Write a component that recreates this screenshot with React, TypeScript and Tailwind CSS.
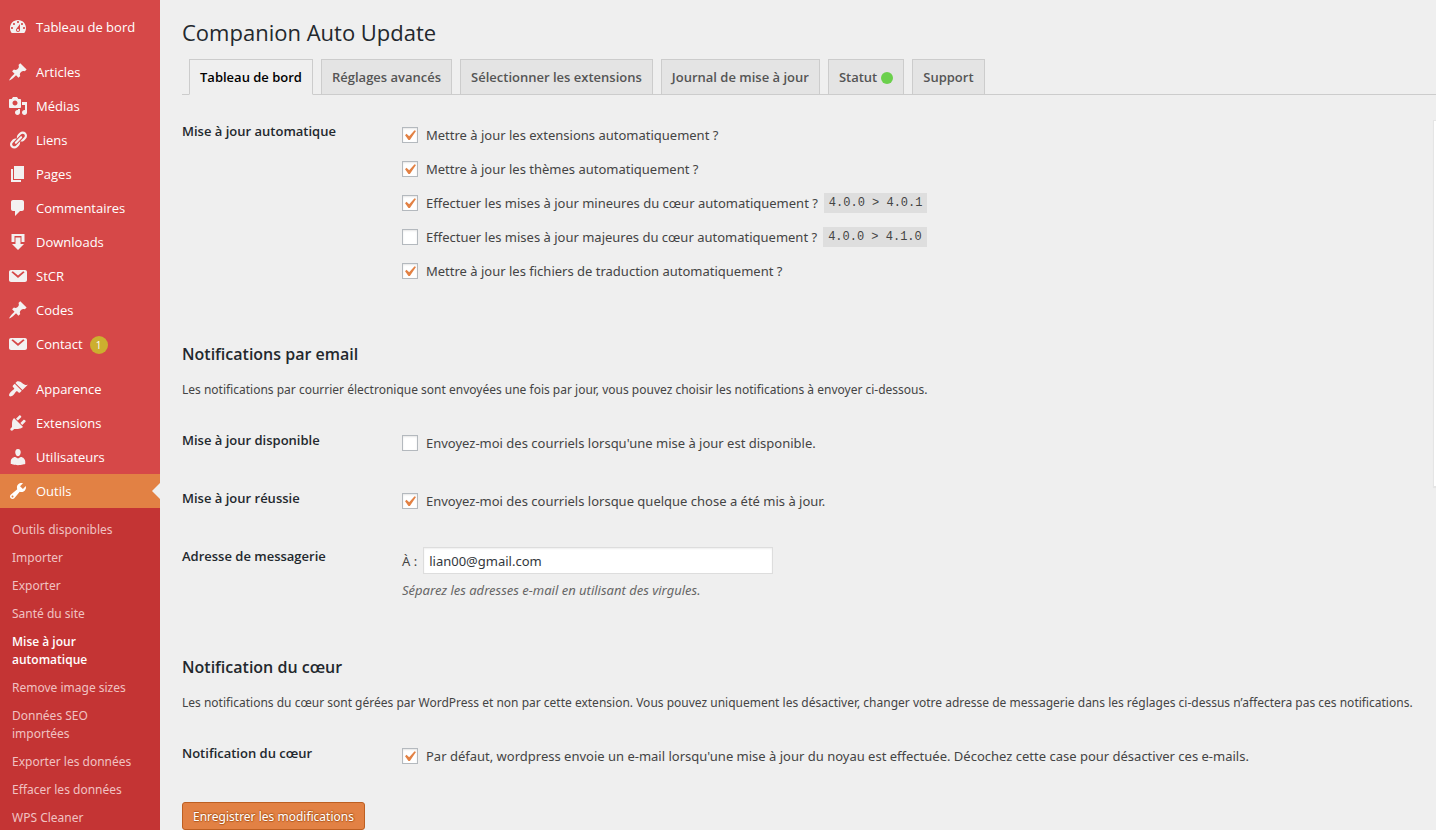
import React from 'react';
import { clsx } from 'clsx';

const ICONS = {
  dashboard:
    'M3.76 16h12.48c1.1-1.37 1.76-3.11 1.76-5 0-4.42-3.58-8-8-8s-8 3.58-8 8c0 1.89.66 3.63 1.76 5zM10 4c.55 0 1 .45 1 1s-.45 1-1 1-1-.45-1-1 .45-1 1-1zM6 6c.55 0 1 .45 1 1s-.45 1-1 1-1-.45-1-1 .45-1 1-1zm8 0c.55 0 1 .45 1 1s-.45 1-1 1-1-.45-1-1 .45-1 1-1zm-5.37 5.55L12 7v6c0 1.1-.9 2-2 2s-2-.9-2-2c0-.57.24-1.08.63-1.45zM4 10c.55 0 1 .45 1 1s-.45 1-1 1-1-.45-1-1 .45-1 1-1zm12 0c.55 0 1 .45 1 1s-.45 1-1 1-1-.45-1-1 .45-1 1-1zm-5 3c0-.55-.45-1-1-1s-1 .45-1 1 .45 1 1 1 1-.45 1-1z',
  pin: 'M10.44 3.02l1.82-1.82 6.36 6.35-1.83 1.82c-1.05-.68-2.48-.57-3.41.36l-.75.75c-.92.93-1.04 2.35-.35 3.41l-1.83 1.82-2.41-2.41-2.8 2.79c-.42.42-3.38 2.71-3.8 2.29s1.86-3.39 2.28-3.81l2.79-2.79L4.1 9.36l1.83-1.82c1.05.69 2.48.57 3.4-.36l.75-.75c.93-.92 1.05-2.35.36-3.41z',
  media:
    'M13 11V4c0-.55-.45-1-1-1h-1.67L9 1H5L3.67 3H2c-.55 0-1 .45-1 1v7c0 .55.45 1 1 1h10c.55 0 1-.45 1-1zM7 4.5c1.38 0 2.5 1.12 2.5 2.5S8.38 9.5 7 9.5 4.5 8.38 4.5 7 5.62 4.5 7 4.5zM14 6h5v10.5c0 1.38-1.12 2.5-2.5 2.5S14 17.88 14 16.5s1.12-2.5 2.5-2.5c.17 0 .34.02.5.05V9h-3V6zm-4 8.05V13h2v3.5c0 1.38-1.12 2.5-2.5 2.5S7 17.88 7 16.5 8.12 14 9.5 14c.17 0 .34.02.5.05z',
  link: 'M17.74 2.76c1.68 1.69 1.68 4.41 0 6.1l-1.53 1.52c-1.12 1.12-2.7 1.47-4.14 1.09l2.62-2.61.76-.77.76-.76c.84-.84.84-2.2 0-3.04-.84-.85-2.2-.85-3.04 0l-.77.76-3.38 3.38c-.37-1.44-.02-3.02 1.1-4.14l1.52-1.53c1.69-1.68 4.42-1.68 6.1 0zM8.59 13.43l5.34-5.34c.42-.42.42-1.1 0-1.52-.44-.43-1.13-.39-1.53 0l-5.33 5.34c-.42.42-.42 1.1 0 1.52.44.43 1.13.39 1.52 0zm-.76 2.29l4.14-4.15c.38 1.44.03 3.02-1.09 4.14l-1.52 1.53c-1.69 1.68-4.41 1.68-6.1 0-1.68-1.68-1.68-4.42 0-6.1l1.53-1.52c1.12-1.12 2.7-1.47 4.14-1.1l-4.14 4.15c-.85.84-.85 2.2 0 3.05.84.84 2.2.84 3.04 0z',
  page: 'M6 15V2h10v13H6zm-1 1h8v2H3V5h2v11z',
  comment:
    'M5 2h9c1.1 0 2 .9 2 2v7c0 1.1-.9 2-2 2h-2l-5 5v-5H5c-1.1 0-2-.9-2-2V4c0-1.1.9-2 2-2z',
  download: 'M3.5 2h13v8h-3V4h-7v6h-3zM7.500 5.500h5V12H16l-6 6-6-6h3.500z',
  mail: 'M3 4h14c1.100 0 2 .9 2 2v8c0 1.100-.9 2-2 2H3c-1.100 0-2-.9-2-2V6c0-1.100.9-2 2-2zm13.600 2.200L15.200 5.200 10 9.600 4.800 5.200 3.400 6.200 10 12z',
  brush:
    'M14.48 11.06L7.41 3.99l1.5-1.5c.5-.56 2.3-.47 3.51.32 1.21.8 1.43 1.28 2.91 2.1 1.18.64 2.45 1.26 4.45.85zm-.71.71L6.7 4.7 4.93 6.47c-.39.39-.39 1.02 0 1.41l1.06 1.06c.39.39.39 1.03 0 1.42-.6.6-1.43 1.11-2.21 1.69-.35.26-.7.53-1.01.84C1.43 14.23.4 16.08 1.4 17.07c.99 1 2.84-.03 4.18-1.36.31-.31.58-.66.85-1.02.57-.78 1.08-1.61 1.69-2.21.39-.39 1.02-.39 1.41 0l1.06 1.06c.39.39 1.02.39 1.41 0z',
  plug: 'M13.11 4.36L9.87 7.6 8 5.73l3.24-3.24c.35-.34 1.05-.2 1.56.32.52.51.66 1.21.31 1.55zm-8 1.77l.91-1.12 9.01 9.01-1.19.84c-.71.71-2.63 1.16-3.82 1.16H6.14L4.9 17.26c-.59.59-1.54.59-2.12 0-.59-.58-.59-1.53 0-2.12l1.24-1.24v-3.88c0-1.13.4-3.19 1.09-3.89zm7.26 3.97l3.24-3.24c.34-.35 1.04-.21 1.55.31.52.51.66 1.21.31 1.55l-3.24 3.25z',
  user: 'M10 9.25c-2.27 0-2.73-3.44-2.73-3.44C7 4.02 7.82 2 9.97 2c2.16 0 2.98 2.02 2.71 3.81 0 0-.41 3.44-2.68 3.44zm0 2.2L12.72 10c2.39 0 4.52 2.33 4.52 4.53v2.49s-3.65 1.13-7.24 1.13c-3.65 0-7.24-1.13-7.24-1.13v-2.49c0-2.25 1.94-4.48 4.47-4.48z',
  wrench:
    'M16.68 9.77c-1.34 1.34-3.3 1.67-4.95.99l-5.41 6.52c-.99.99-2.59.99-3.58 0s-.99-2.59 0-3.57l6.52-5.42c-.68-1.65-.35-3.61.99-4.95 1.28-1.28 3.12-1.62 4.72-1.06l-2.89 2.89 2.82 2.82 2.86-2.87c.53 1.58.18 3.39-1.08 4.65zM3.81 16.21c.4.39 1.04.39 1.43 0 .4-.4.4-1.04 0-1.43-.39-.4-1.03-.4-1.43 0-.39.39-.39 1.03 0 1.43z',
};

interface MenuItem {
  label: string;
  icon: keyof typeof ICONS;
  count?: number;
  active?: boolean;
}

const menuGroups: MenuItem[][] = [
  [{ label: 'Tableau de bord', icon: 'dashboard' }],
  [
    { label: 'Articles', icon: 'pin' },
    { label: 'Médias', icon: 'media' },
    { label: 'Liens', icon: 'link' },
    { label: 'Pages', icon: 'page' },
    { label: 'Commentaires', icon: 'comment' },
    { label: 'Downloads', icon: 'download' },
    { label: 'StCR', icon: 'mail' },
    { label: 'Codes', icon: 'pin' },
    { label: 'Contact', icon: 'mail', count: 1 },
  ],
  [
    { label: 'Apparence', icon: 'brush' },
    { label: 'Extensions', icon: 'plug' },
    { label: 'Utilisateurs', icon: 'user' },
    { label: 'Outils', icon: 'wrench', active: true },
  ],
];

const subMenu = [
  'Outils disponibles',
  'Importer',
  'Exporter',
  'Santé du site',
  'Mise à jour automatique',
  'Remove image sizes',
  'Données SEO importées',
  'Exporter les données',
  'Effacer les données',
  'WPS Cleaner',
];

const tabs = [
  { label: 'Tableau de bord', active: true },
  { label: 'Réglages avancés' },
  { label: 'Sélectionner les extensions' },
  { label: 'Journal de mise à jour' },
  { label: 'Statut', dot: true },
  { label: 'Support' },
];

const updateOptions = [
  { id: 'plugins', label: 'Mettre à jour les extensions automatiquement ?', checked: true },
  { id: 'themes', label: 'Mettre à jour les thèmes automatiquement ?', checked: true },
  { id: 'minor', label: 'Effectuer les mises à jour mineures du cœur automatiquement ?', checked: true, code: '4.0.0 > 4.0.1' },
  { id: 'major', label: 'Effectuer les mises à jour majeures du cœur automatiquement ?', checked: false, code: '4.0.0 > 4.1.0' },
  { id: 'translations', label: 'Mettre à jour les fichiers de traduction automatiquement ?', checked: true },
];

function Icon({ name }: { name: keyof typeof ICONS }) {
  return (
    <svg viewBox="0 0 20 20" className="h-5 w-5 shrink-0" fill="currentColor" fillRule="evenodd" aria-hidden="true">
      <path d={ICONS[name]} />
    </svg>
  );
}

function Sidebar() {
  return (
    <aside className="w-40 shrink-0 bg-[#d64848] pt-[10px] text-white">
      <nav>
        {menuGroups.map((group, i) => (
          <ul key={i} className={clsx(i > 0 && 'mt-[11px]')}>
            {group.map((item) => (
              <li key={item.label}>
                <a
                  href="#"
                  className={clsx(
                    'relative flex h-[34px] items-center gap-2 pl-2 text-[13px]',
                    item.active ? 'bg-[#e28144]' : 'hover:bg-[#c43434]'
                  )}
                >
                  <span className={clsx(item.active ? 'text-white' : 'text-[#f3f1f1]')}>
                    <Icon name={item.icon} />
                  </span>
                  <span className="pt-[2px]">{item.label}</span>
                  {item.count && (
                    <span className="-ml-px mt-[2px] flex h-[18px] w-[18px] items-center justify-center rounded-full bg-[#ccaf2f] text-[10px]">
                      {item.count}
                    </span>
                  )}
                  {item.active && (
                    <span className="absolute right-0 top-[9px] border-y-8 border-r-8 border-y-transparent border-r-[#efefef]" />
                  )}
                </a>
              </li>
            ))}
          </ul>
        ))}
      </nav>
      <ul className="bg-[#c43434] py-2">
        {subMenu.map((label) => (
          <li key={label}>
            <a
              href="#"
              className={clsx(
                'block py-[5px] pl-3 pr-6 text-[12px] leading-[18px]',
                label === 'Mise à jour automatique'
                  ? 'font-semibold text-white'
                  : "font-['Noto_Sans',sans-serif] text-[#f0c2c2]"
              )}
            >
              {label}
            </a>
          </li>
        ))}
      </ul>
    </aside>
  );
}

function Checkbox({ id, label, checked }: { id: string; label: string; checked: boolean }) {
  return (
    <div className="flex items-center gap-2">
      <span className="relative h-4 w-4">
        <input
          id={id}
          type="checkbox"
          defaultChecked={checked}
          className="peer block h-4 w-4 appearance-none border border-[#b4b9be] bg-white shadow-[inset_0_1px_2px_rgba(0,0,0,0.1)]"
        />
        <svg
          viewBox="0 0 20 20"
          className="pointer-events-none absolute -left-[3px] -top-[2px] hidden h-[21px] w-[21px] fill-[#e28144] peer-checked:block"
          aria-hidden="true"
        >
          <path d="M14.830 4.890l1.340.940-5.810 8.380H9.020L5.780 9.670l1.340-1.250 2.570 2.400z" />
        </svg>
      </span>
      <label htmlFor={id} className="pt-[2px]">
        {label}
      </label>
    </div>
  );
}

function Row({ title, children }: { title: string; children: React.ReactNode }) {
  return (
    <div className="grid min-h-[58px] grid-cols-[220px_1fr]">
      <div className="font-semibold leading-[26px] text-[#23282d]">{title}</div>
      <div className="font-['Noto_Sans',sans-serif]">{children}</div>
    </div>
  );
}

function Intro({ title, text }: { title: string; text: string }) {
  return (
    <>
      <h2 className="mt-[54px] text-[16px] font-semibold leading-6 text-[#23282d]">{title}</h2>
      <p className="mb-[25px] mt-3 whitespace-nowrap font-['Noto_Sans',sans-serif] text-[12px] leading-6">{text}</p>
    </>
  );
}

export default function App() {
  return (
    <div className="flex min-h-screen overflow-hidden bg-[#efefef] font-['Open_Sans',sans-serif] text-[13px] text-[#444]">
      <Sidebar />
      <main className="min-w-0 flex-1 pl-[22px] pt-[17px]">
        <h1 className="text-[22px] leading-[30px] text-[#23282d]">Companion Auto Update</h1>

        <nav className="mt-3 flex gap-2 border-b border-[#ccc] pl-[7px]">
          {tabs.map((tab) => (
            <a
              key={tab.label}
              href="#"
              className={clsx(
                '-mb-px flex h-9 items-center gap-1 whitespace-nowrap border border-[#ccc] px-[10px] pt-[2px] font-semibold',
                tab.active ? 'border-b-[#efefef] bg-[#efefef] text-black' : 'bg-[#e4e4e4] text-[#555]'
              )}
            >
              {tab.label}
              {tab.dot && <span className="h-3 w-3 rounded-full bg-[#6bd04c]" />}
            </a>
          ))}
        </nav>

        <div className="flex items-start">
          <form className="w-[calc(100%-3px)] shrink-0 pt-[23px]">
            <Row title="Mise à jour automatique">
              {updateOptions.map((option) => (
                <div key={option.id} className="flex h-[34px] items-center gap-[6px]">
                  <Checkbox id={option.id} label={option.label} checked={option.checked} />
                  {option.code && (
                    <code className="bg-[#dedede] px-[5px] font-['Liberation_Mono',monospace] text-[12px] leading-5">
                      {option.code}
                    </code>
                  )}
                </div>
              ))}
            </Row>

            <Intro
              title="Notifications par email"
              text="Les notifications par courrier électronique sont envoyées une fois par jour, vous pouvez choisir les notifications à envoyer ci-dessous."
            />
            <Row title="Mise à jour disponible">
              <div className="flex h-8 items-center">
                <Checkbox id="available" label="Envoyez-moi des courriels lorsqu'une mise à jour est disponible." checked={false} />
              </div>
            </Row>
            <Row title="Mise à jour réussie">
              <div className="flex h-8 items-center">
                <Checkbox id="success" label="Envoyez-moi des courriels lorsque quelque chose a été mis à jour." checked={true} />
              </div>
            </Row>
            <Row title="Adresse de messagerie">
              <div className="flex items-center gap-[6px] pt-1">
                <label htmlFor="email" className="pt-[2px]">
                  À :
                </label>
                <input
                  id="email"
                  type="text"
                  defaultValue="lian00@gmail.com"
                  className="h-[27px] w-[350px] border border-[#ddd] bg-white px-[5px] text-[#32373c] shadow-[inset_0_1px_2px_rgba(0,0,0,0.07)]"
                />
              </div>
              <p className="mt-[6px] italic leading-5 text-[#666]">Séparez les adresses e-mail en utilisant des virgules.</p>
            </Row>

            <Intro
              title="Notification du cœur"
              text="Les notifications du cœur sont gérées par WordPress et non par cette extension. Vous pouvez uniquement les désactiver, changer votre adresse de messagerie dans les réglages ci-dessus n’affectera pas ces notifications."
            />
            <Row title="Notification du cœur">
              <div className="flex h-8 items-center">
                <Checkbox
                  id="core"
                  label="Par défaut, wordpress envoie un e-mail lorsqu'une mise à jour du noyau est effectuée. Décochez cette case pour désactiver ces e-mails."
                  checked={true}
                />
              </div>
            </Row>
            <button
              type="button"
              className="mt-1 h-7 rounded-[3px] border border-[#bd5f22] bg-[#e28144] px-[10px] pt-[2px] font-['Noto_Sans',sans-serif] text-[12px] text-white [text-shadow:0_-1px_1px_#b25a20,1px_0_1px_#b25a20,0_1px_1px_#b25a20]"
            >
              Enregistrer les modifications
            </button>
          </form>
          <div className="mt-[25px] h-[367px] w-[280px] shrink-0 border border-[#e5e5e5] bg-white shadow-[0_1px_1px_rgba(0,0,0,0.04)]" />
        </div>
      </main>
    </div>
  );
}
